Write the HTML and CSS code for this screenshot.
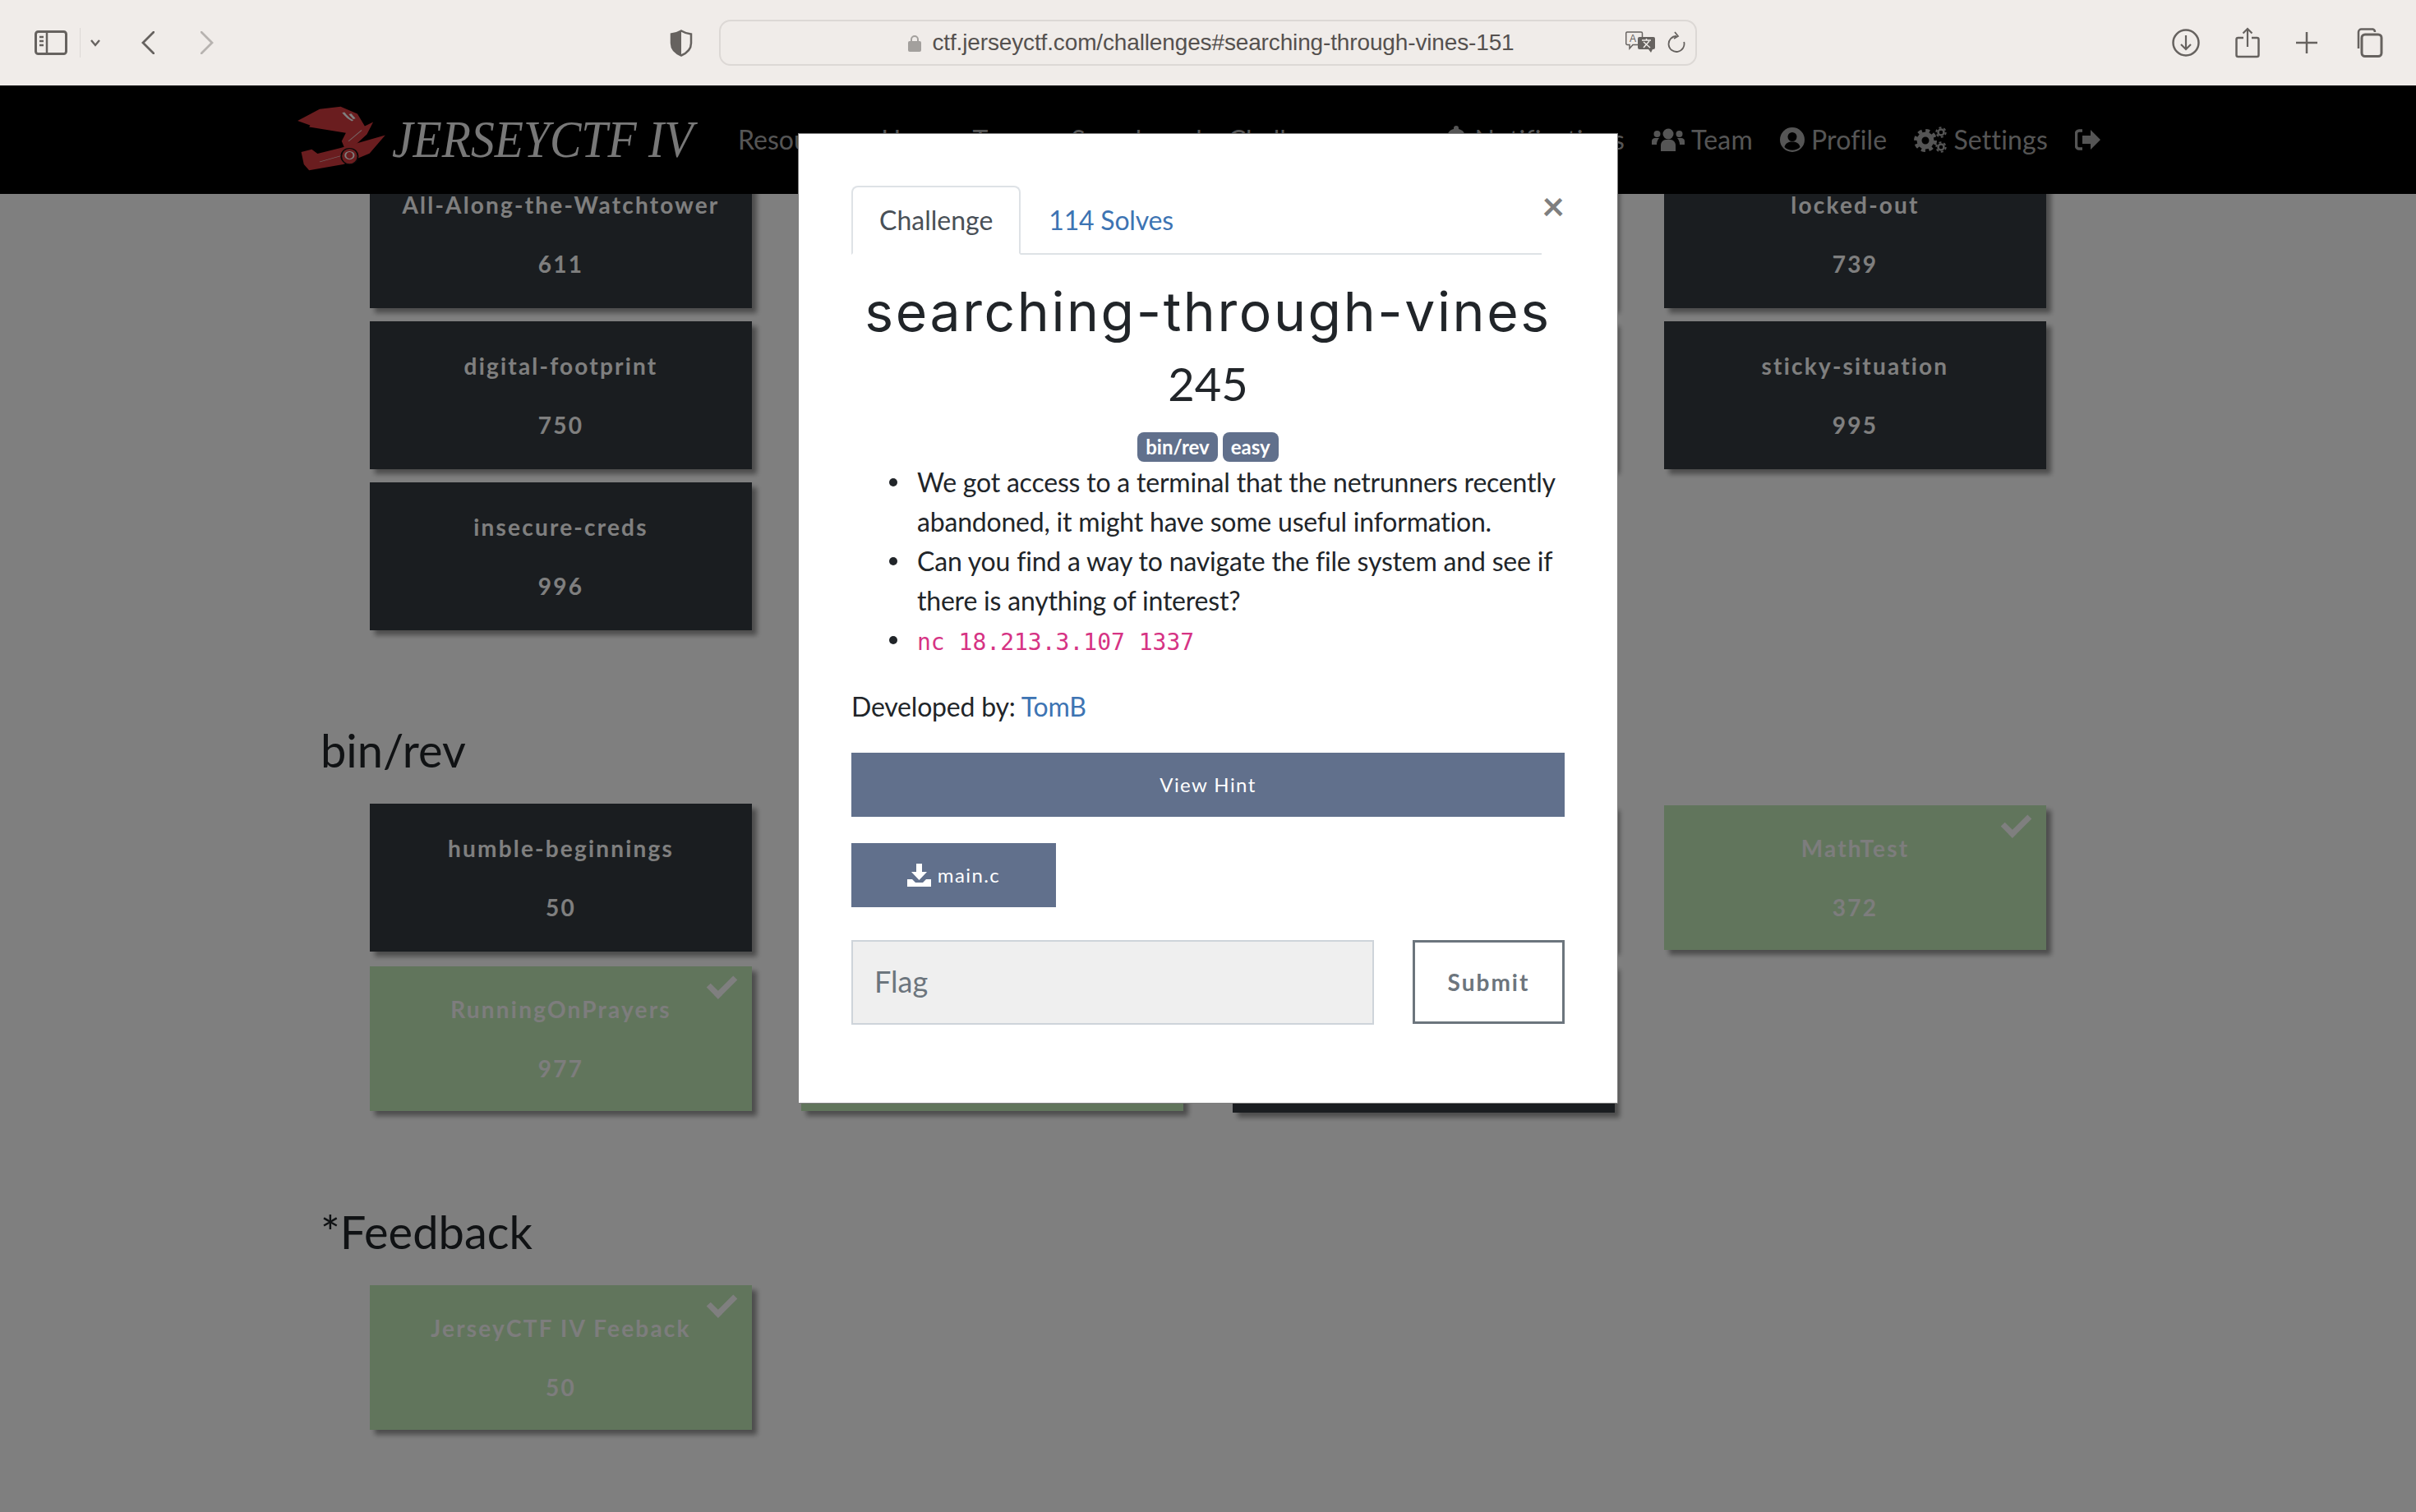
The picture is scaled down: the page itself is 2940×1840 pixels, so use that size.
FILE: index.html
```html
<!DOCTYPE html>
<html lang="en">
<head>
    <meta charset="UTF-8">
    <title>searching-through-vines</title>
    <link rel="stylesheet" href="styles.css">
</head>
<body>
    <header class="browser-bar">
        <div class="bar-left">
            <svg class="sidebar-icon" width="40" height="30" viewBox="0 0 40 30"><rect x="1.5" y="1.5" width="37" height="27" rx="3" fill="none" stroke="#66625f" stroke-width="3"/><path d="M15 2v26" stroke="#66625f" stroke-width="2.5"/><path d="M6 8h5M6 13h5M6 18h5" stroke="#66625f" stroke-width="2.5"/></svg>
            <span class="bar-divider"></span>
            <svg class="small-chevron" width="14" height="10" viewBox="0 0 14 10"><path d="M2 2l5 6 5-6" fill="none" stroke="#66625f" stroke-width="2.4"/></svg>
            <svg class="back-icon" width="16" height="28" viewBox="0 0 16 28"><path d="M15 1L2 14l13 13" fill="none" stroke="#66625f" stroke-width="2.8" stroke-linecap="round"/></svg>
            <svg class="forward-icon" width="16" height="28" viewBox="0 0 16 28"><path d="M1 1l13 13L1 27" fill="none" stroke="#b7b3b0" stroke-width="2.8" stroke-linecap="round"/></svg>
        </div>
        <svg class="shield-icon" width="28" height="33" viewBox="0 0 28 33"><path d="M14 1.5c4 2.5 8 3.500 12 4v11c0 7-5 12-12 15-7-3-12-8-12-15v-11c4-.5 8-1.500 12-4z" fill="none" stroke="#66625f" stroke-width="2.5"/><path d="M14 1.500c-4 2.500-8 3.500-12 4v11c0 7 5 12 12 15z" fill="#66625f"/></svg>
        <div class="address-bar">
            <div class="address-text">
                <svg width="16" height="21" viewBox="0 0 16 21"><path d="M4 9V6a4 4 0 0 1 8 0v3" fill="none" stroke="#a3a09d" stroke-width="2"/><rect y="8" width="16" height="13" rx="2" fill="#a3a09d"/></svg>
                <span>ctf.jerseyctf.com/challenges#searching-through-vines-151</span>
            </div>
            <svg class="translate-icon" width="36" height="26" viewBox="0 0 36 26"><path d="M2 1h17a1.500 1.500 0 0 1 1.500 1.500V15a1.500 1.500 0 0 1-1.500 1.500H9L5 21v-4.500H2A1.500 1.500 0 0 1 .7 15V2.500A1.500 1.500 0 0 1 2 1z" fill="#f0ecE9" stroke="#66625f" stroke-width="1.500"/><text x="5" y="13" class="translate-a">A</text><path d="M17 7h17a2 2 0 0 1 2 2v11a2 2 0 0 1-2 2h-1l-2 4-3-4H17a2 2 0 0 1-2-2V9a2 2 0 0 1 2-2z" fill="#66625f"/><path d="M20 11h11M25.500 9v2M22 20l7-8M22 13l8 7" stroke="#f0ecE9" stroke-width="1.500" fill="none"/></svg>
            <svg class="reload-icon" width="22" height="26" viewBox="0 0 22 26"><path d="M11 6A9.500 9.500 0 1 0 20.200 13" fill="none" stroke="#66625f" stroke-width="1.800"/><path d="M9 1l4 5-5 3" fill="none" stroke="#66625f" stroke-width="1.800"/></svg>
        </div>
        <div class="bar-right">
            <svg width="34" height="34" viewBox="0 0 34 34"><circle cx="17" cy="17" r="15.500" fill="none" stroke="#66625f" stroke-width="2.500"/><path d="M17 8v17M11 19l6 6 6-6" fill="none" stroke="#66625f" stroke-width="2.200"/></svg>
            <svg width="30" height="38" viewBox="0 0 30 38"><path d="M10 13H3.500A2 2 0 0 0 1.500 15v19a2 2 0 0 0 2 2h23a2 2 0 0 0 2-2V15a2 2 0 0 0-2-2H20" fill="none" stroke="#66625f" stroke-width="2.500"/><path d="M15 24V2M9.500 7.500L15 2l5.500 5.500" fill="none" stroke="#66625f" stroke-width="2.200"/></svg>
            <svg width="28" height="28" viewBox="0 0 28 28"><path d="M14 1v26M1 14h26" stroke="#66625f" stroke-width="2.500"/></svg>
            <svg width="36" height="36" viewBox="0 0 36 36"><path d="M6 25V5a3.500 3.500 0 0 1 3.500-3.500h14A3.500 3.500 0 0 1 26 5" fill="none" stroke="#66625f" stroke-width="2.500"/><rect x="10" y="8" width="24" height="26.500" rx="4" fill="#f0ecE9" stroke="#66625f" stroke-width="3"/></svg>
        </div>
    </header>

    <div class="page">
        <nav class="topbar">
            <div class="brand">
                <svg class="helmet" width="115" height="83" viewBox="560 385 180 250" preserveAspectRatio="none">
                    <path d="M568 445L610 402 650 393 682 420 696 465 712 450 700 495 680 530 658 548 652 520 660 490 590 468 592 462z" fill="#d43a3e"/>
                    <path d="M575 560L595 550 606 566 650 545 735 498 705 565 655 605 590 627 580 605z" fill="#d43a3e"/>
                    <path d="M655 415c5 10 8 22 18 30M668 420c3 8 5 10 8 18" stroke="#fff" stroke-width="5" fill="none"/>
                    <ellipse cx="667" cy="575" rx="16" ry="29" fill="#d43a3e" stroke="#111" stroke-width="3"/>
                    <ellipse cx="667" cy="572" rx="8" ry="14" fill="none" stroke="#fff" stroke-width="3"/>
                    <path d="M610 596l40-22M665 520l25-40" stroke="#ecc" stroke-width="2"/>
                </svg>
                <span class="brand-name">JERSEYCTF IV</span>
            </div>
            <ul class="nav-links">
                <li>Resources</li>
                <li>Users</li>
                <li>Teams</li>
                <li>Scoreboard</li>
                <li>Challenges</li>
            </ul>
            <ul class="nav-links nav-right">
                <li><svg width="30" height="34" viewBox="0 0 30 34"><path d="M15 0a3 3 0 0 1 3 3v1c5 1 8 5 8 10 0 6 2 9 4 11v3H0v-3c2-2 4-5 4-11 0-5 3-9 8-10V3a3 3 0 0 1 3-3zM11 30h8a4 4 0 0 1-8 0z" fill="#aaa"/></svg>Notifications</li>
                <li><svg width="40" height="30" viewBox="0 0 40 30"><circle cx="20" cy="8" r="6.500" fill="#aaa"/><path d="M11 29v-7c0-4 3-7 6-7h6c3 0 6 3 6 7v7z" fill="#aaa"/><circle cx="6.500" cy="8" r="4" fill="#aaa"/><circle cx="33.500" cy="8" r="4" fill="#aaa"/><path d="M0 21v-4c0-3 2-4 4-4h5c-2 2-3 5-3 8zM40 21v-4c0-3-2-4-4-4h-5c2 2 3 5 3 8z" fill="#aaa"/></svg>Team</li>
                <li><svg width="30" height="30" viewBox="0 0 30 30"><circle cx="15" cy="15" r="15" fill="#aaa"/><circle cx="15" cy="11.500" r="5.500" fill="#000"/><path d="M5.500 24c1-5 5-6.500 9.500-6.500s8.500 1.500 9.500 6.500c-5 5-14 5-19 0z" fill="#000"/></svg>Profile</li>
                <li><svg width="40" height="32" viewBox="0 0 40 32"><g fill="none" stroke="#aaa"><circle cx="14" cy="17" r="7.500" stroke-width="6"/><circle cx="14" cy="17" r="12" stroke-width="4" stroke-dasharray="5 4.400"/><circle cx="33" cy="7" r="3.500" stroke-width="2.500"/><circle cx="33" cy="7" r="5.700" stroke-width="2" stroke-dasharray="3 2.900"/><circle cx="33" cy="25" r="3.500" stroke-width="2.500"/><circle cx="33" cy="25" r="5.700" stroke-width="2" stroke-dasharray="3 2.900"/></g></svg>Settings</li>
                <li><svg width="31" height="26" viewBox="0 0 31 26"><path d="M9 2H5a3.500 3.500 0 0 0-3.500 3.500v15A3.500 3.500 0 0 0 5 24h4" fill="none" stroke="#aaa" stroke-width="3.500"/><path d="M19 1l12 12-12 12v-7H9V8h10z" fill="#aaa"/></svg></li>
            </ul>
        </nav>

        <main class="board">
            <section class="category no-title">
                <div class="columns">
                    <div class="column">
                        <div class="card"><span>All-Along-the-Watchtower</span><span>611</span></div>
                        <div class="card"><span>digital-footprint</span><span>750</span></div>
                        <div class="card"><span>insecure-creds</span><span>996</span></div>
                    </div>
                    <div class="column">
                        <div class="card"></div>
                        <div class="card"></div>
                    </div>
                    <div class="column">
                        <div class="card"></div>
                        <div class="card"></div>
                    </div>
                    <div class="column">
                        <div class="card"><span>locked-out</span><span>739</span></div>
                        <div class="card"><span>sticky-situation</span><span>995</span></div>
                    </div>
                </div>
            </section>

            <section class="category">
                <h2>bin/rev</h2>
                <div class="columns">
                    <div class="column">
                        <div class="card"><span>humble-beginnings</span><span>50</span></div>
                        <div class="card solved"><span>RunningOnPrayers</span><span>977</span></div>
                    </div>
                    <div class="column">
                        <div class="card solved"></div>
                        <div class="card solved"></div>
                    </div>
                    <div class="column">
                        <div class="card solved"></div>
                        <div class="card"></div>
                    </div>
                    <div class="column">
                        <div class="card solved"><span>MathTest</span><span>372</span></div>
                    </div>
                </div>
            </section>

            <section class="category feedback">
                <h2>*Feedback</h2>
                <div class="columns">
                    <div class="column">
                        <div class="card solved"><span>JerseyCTF IV Feeback</span><span>50</span></div>
                    </div>
                </div>
            </section>
        </main>

        <div class="backdrop"></div>

        <div class="modal">
            <div class="modal-head">
                <ul class="tabs">
                    <li class="tab active">Challenge</li>
                    <li class="tab">114 Solves</li>
                </ul>
                <span class="close">×</span>
            </div>
            <h3 class="challenge-name">searching-through-vines</h3>
            <div class="challenge-value">245</div>
            <div class="tags">
                <span class="tag">bin/rev</span>
                <span class="tag">easy</span>
            </div>
            <ul class="description">
                <li>We got access to a terminal that the netrunners recently abandoned, it might have some useful information.</li>
                <li>Can you find a way to navigate the file system and see if there is anything of interest?</li>
                <li><code>nc 18.213.3.107 1337</code></li>
            </ul>
            <p class="developer">Developed by: <a href="#">TomB</a></p>
            <div class="btn btn-wide">View Hint</div>
            <div class="btn btn-file">
                <svg width="29" height="28" viewBox="0 0 29 28"><path d="M11 0h7v10h6l-9.500 10L5 10h6z" fill="#fff"/><path d="M0 19h6l4 4h9l4-4h6v9H0z" fill="#fff"/></svg>
                main.c
            </div>
            <div class="flag-row">
                <input class="flag-input" type="text" placeholder="Flag">
                <div class="submit">Submit</div>
            </div>
        </div>
    </div>
</body>
</html>
```

FILE: styles.css
```css
* {
    box-sizing: border-box;
}
html, body {
    height: 100%;
    margin: 0;
    overflow: hidden;
}
body {
    display: flex;
    flex-direction: column;
    font-family: Lato, "Liberation Sans", sans-serif;
    font-size: 32px;
    line-height: 48px;
    color: #212529;
    background-color: #fff;
}
ul {
    list-style: none;
    margin: 0;
    padding: 0;
}

/* browser chrome */
.browser-bar {
    position: relative;
    flex: 0 0 104px;
    display: flex;
    align-items: center;
    background-color: #f0ece9;
}
.bar-left {
    display: flex;
    align-items: center;
    width: 815px;
    padding-left: 42px;
}
.bar-divider {
    width: 1px;
    height: 36px;
    margin: 0 11px 0 15px;
    background-color: #dcd8d5;
}
.small-chevron {
    margin-right: 49px;
}
.back-icon {
    margin-right: 56px;
}
.shield-icon {
    flex: none;
}
.address-bar {
    position: relative;
    display: flex;
    align-items: center;
    justify-content: center;
    width: 1190px;
    height: 56px;
    margin-left: 32px;
    border: 2px solid #dcd8d5;
    border-radius: 14px;
}
.address-text {
    display: flex;
    align-items: center;
    gap: 13px;
    margin-left: 8px;
    font-family: "Liberation Sans", sans-serif;
    font-size: 28px;
    letter-spacing: -0.14px;
    color: #55514f;
}
.translate-icon {
    position: absolute;
    right: 49px;
    top: 12px;
}
.translate-a {
    font-family: "Liberation Sans", sans-serif;
    font-size: 12px;
    fill: #66625f;
}
.reload-icon {
    position: absolute;
    right: 12px;
    top: 12px;
}
.bar-right {
    display: flex;
    align-items: center;
    gap: 43px;
    margin-left: 578px;
}

/* page */
.page {
    position: relative;
    flex: 1;
    overflow: hidden;
}
.topbar {
    position: relative;
    z-index: 1;
    display: flex;
    align-items: center;
    height: 132px;
    padding: 0 384px 0 357px;
    background-color: #000;
}
.brand {
    display: flex;
    align-items: center;
    margin-right: 55px;
}
.helmet {
    margin-top: -4px;
}
.brand-name {
    margin-left: 5px;
    margin-right: -41px;
    font-family: "Liberation Serif", serif;
    font-style: italic;
    font-size: 64px;
    line-height: 64px;
    color: #f0f0f0;
    transform: scaleX(0.9);
    transform-origin: left center;
}
.nav-links {
    display: flex;
    align-items: center;
    gap: 32px;
    color: #aaa;
}
.nav-links li {
    display: flex;
    align-items: center;
    gap: 8px;
}
.nav-right {
    gap: 33px;
    margin-left: auto;
    letter-spacing: 0.2px;
}
.board {
    margin-top: -41px;
    padding-left: 390px;
}
.category {
    margin-top: 104px;
}
.category.no-title {
    margin-top: 0;
}
.category.feedback {
    margin-top: 103px;
}
.category.feedback h2 {
    margin-bottom: 21px;
}
h2 {
    margin: 0 0 23px;
    font-size: 56px;
    line-height: 84px;
    font-weight: 400;
}
.columns {
    display: flex;
    gap: 60px;
    margin-left: 60px;
}
.column {
    display: flex;
    flex-direction: column;
    gap: 16px;
    width: 465px;
}
.card {
    position: relative;
    display: flex;
    flex-direction: column;
    align-items: center;
    justify-content: center;
    gap: 36px;
    height: 180px;
    font-size: 28px;
    line-height: 36px;
    font-weight: 700;
    letter-spacing: 2.2px;
    color: #fff;
    background-color: #343a40;
    box-shadow: 6px 6px 6px rgba(0, 0, 0, 0.4);
}
.card.solved {
    height: 176px;
    margin: 2px 0;
    color: #fafafa;
    background-color: #c3eab9;
}
.card.solved::after {
    content: "";
    position: absolute;
    top: 11px;
    right: 20px;
    width: 26px;
    height: 13px;
    border-left: 7px solid #fff;
    border-bottom: 7px solid #fff;
    transform: rotate(-45deg);
}
.backdrop {
    position: absolute;
    inset: 0;
    z-index: 2;
    background-color: rgba(0, 0, 0, 0.5);
}

/* modal */
.modal {
    position: absolute;
    top: 58px;
    left: 971px;
    z-index: 3;
    width: 998px;
    height: 1181px;
    padding: 63px 64px 0;
    background-color: #fff;
    border: 1px solid rgba(0, 0, 0, 0.5);
}
.modal-head {
    display: flex;
    align-items: flex-start;
}
.tabs {
    display: flex;
    flex: 1;
    border-bottom: 2px solid #dee2e6;
}
.tab {
    height: 84px;
    margin-bottom: -2px;
    padding: 16px 32px;
    letter-spacing: -0.2px;
    color: #3d74b3;
    border: 2px solid transparent;
}
.tab.active {
    letter-spacing: 0;
    color: #495057;
    background-color: #fff;
    border-color: #dee2e6 #dee2e6 #fff;
    border-radius: 8px 8px 0 0;
}
.close {
    font-size: 48px;
    line-height: 48px;
    font-weight: 700;
    color: #7f7f7f;
}
.challenge-name {
    margin: 19px 0 0;
    font-family: Inter, sans-serif;
    font-size: 66px;
    line-height: 100px;
    font-weight: 400;
    letter-spacing: 2.6px;
    text-align: center;
}
.challenge-value {
    margin-top: -4px;
    font-size: 56px;
    line-height: 84px;
    text-align: center;
}
.tags {
    display: flex;
    justify-content: center;
    gap: 6px;
    margin-top: 17px;
}
.tag {
    padding: 0 10px;
    font-size: 24px;
    line-height: 36px;
    font-weight: 700;
    color: #fff;
    background-color: #61708c;
    border-radius: 8px;
}
.description {
    margin-top: 1px;
    padding-left: 80px;
    letter-spacing: -0.2px;
}
.description li {
    position: relative;
}
.description li::before {
    content: "";
    position: absolute;
    top: 19px;
    left: -34px;
    width: 10px;
    height: 10px;
    background-color: #212529;
    border-radius: 50%;
}
code {
    font-family: "DejaVu Sans Mono", monospace;
    font-size: 28px;
    letter-spacing: 0;
    color: #d63384;
}
.developer {
    margin: 30px 0 0;
    letter-spacing: -0.2px;
}
.developer a {
    color: #3d74b3;
    text-decoration: none;
}
.btn {
    display: flex;
    align-items: center;
    justify-content: center;
    height: 78px;
    font-size: 24px;
    letter-spacing: 1.400px;
    color: #fff;
    background-color: #61708c;
}
.btn-wide {
    margin-top: 32px;
}
.btn-file {
    gap: 8px;
    width: 249px;
    margin-top: 32px;
}
.flag-row {
    display: flex;
    justify-content: space-between;
    margin-top: 40px;
}
.flag-input {
    width: 636px;
    height: 103px;
    padding: 0 26px 3px;
    font-family: Lato, sans-serif;
    font-size: 36px;
    background-color: #efefef;
    border: 2px solid #ced4da;
    border-radius: 0;
}
.flag-input::placeholder {
    color: #6c757d;
}
.submit {
    display: flex;
    align-items: center;
    justify-content: center;
    width: 185px;
    height: 102px;
    font-size: 28px;
    font-weight: 700;
    letter-spacing: 2px;
    color: #6c757d;
    border: 3px solid #6c757d;
}
```
